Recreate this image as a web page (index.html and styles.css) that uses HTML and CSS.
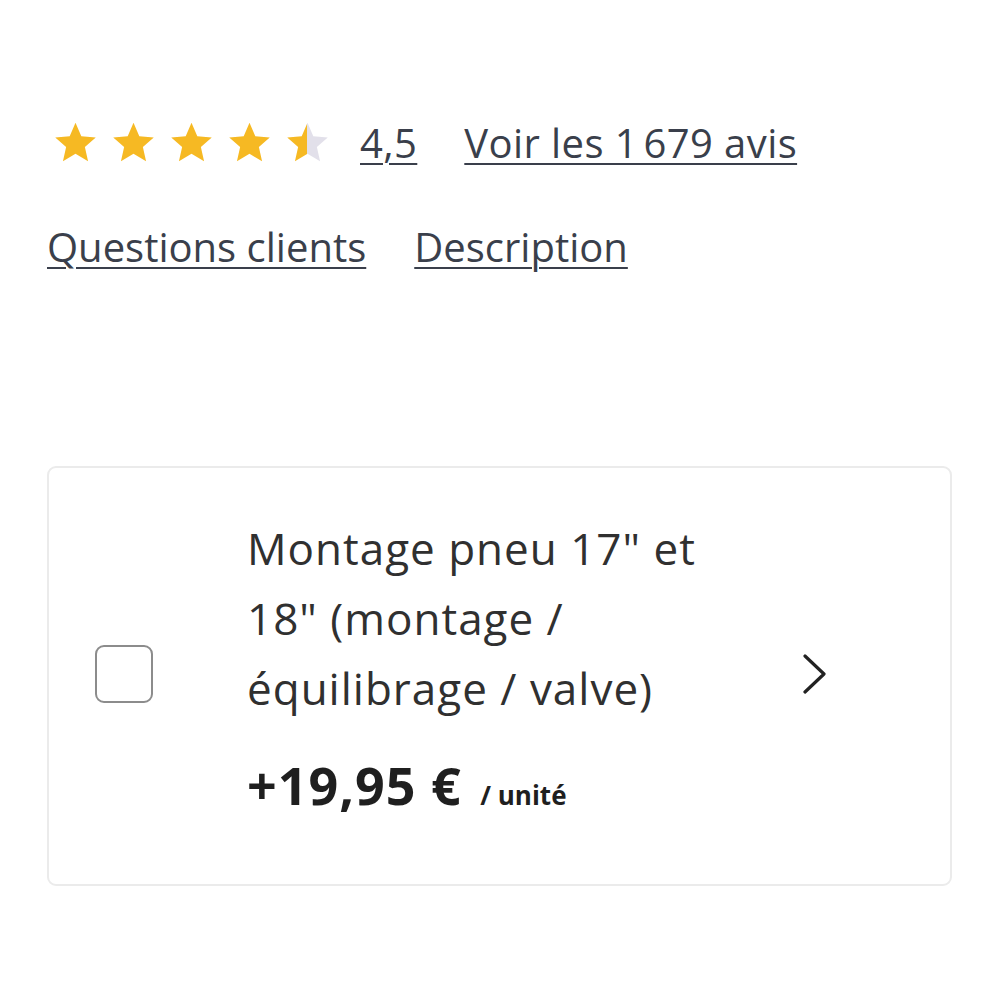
FILE: index.html
```html
<!DOCTYPE html>
<html lang="fr">

<head>
    <meta charset="UTF-8">
    <meta name="viewport" content="width=device-width, initial-scale=1.0">
    <title>Montage pneu</title>
    <link rel="stylesheet" href="styles.css">
</head>

<body>
    <section class="avis">
        <div class="etoiles">
            <svg class="etoile" viewBox="0 0 24 24"><path d="M12 1.5l3.1 7.1 7.7.7-5.8 5.1 1.7 7.6L12 18l-6.7 4 1.7-7.6-5.8-5.1 7.7-.7z" fill="#f6b923"/></svg>
            <svg class="etoile" viewBox="0 0 24 24"><path d="M12 1.5l3.1 7.1 7.7.7-5.8 5.1 1.7 7.6L12 18l-6.7 4 1.7-7.6-5.8-5.1 7.7-.7z" fill="#f6b923"/></svg>
            <svg class="etoile" viewBox="0 0 24 24"><path d="M12 1.5l3.1 7.1 7.7.7-5.8 5.1 1.7 7.6L12 18l-6.7 4 1.7-7.6-5.8-5.1 7.7-.7z" fill="#f6b923"/></svg>
            <svg class="etoile" viewBox="0 0 24 24"><path d="M12 1.5l3.1 7.1 7.7.7-5.8 5.1 1.7 7.6L12 18l-6.7 4 1.7-7.6-5.8-5.1 7.7-.7z" fill="#f6b923"/></svg>
            <svg class="etoile" viewBox="0 0 24 24">
                <defs>
                    <linearGradient id="moitie">
                        <stop offset="50%" stop-color="#f6b923"/>
                        <stop offset="50%" stop-color="#e2e0ea"/>
                    </linearGradient>
                </defs>
                <path d="M12 1.5l3.1 7.1 7.7.7-5.8 5.1 1.7 7.6L12 18l-6.7 4 1.7-7.6-5.8-5.1 7.7-.7z" fill="url(#moitie)"/>
            </svg>
        </div>
        <a href="#" class="lien note">4,5</a>
        <a href="#" class="lien">Voir les 1&#8239;679 avis</a>
    </section>

    <nav class="onglets">
        <a href="#" class="lien">Questions clients</a>
        <a href="#" class="lien">Description</a>
    </nav>

    <article class="option">
        <span class="case"></span>
        <div class="option-texte">
            <p class="option-titre">Montage pneu 17" et 18" (montage / équilibrage / valve)</p>
            <p class="option-prix">+19,95 € <span class="unite">/ unité</span></p>
        </div>
        <svg class="chevron" viewBox="0 0 24 40"><polyline points="2,2 21,20 2,38" fill="none" stroke="#222" stroke-width="3.2" stroke-linecap="round" stroke-linejoin="round"/></svg>
    </article>
</body>

</html>
```

FILE: styles.css
```css
/* Page */
body {
    font-family: "Open Sans", "Noto Sans", sans-serif;
    margin: 0;
    padding: 0 48px 0 47px;
    background-color: #fff;
    color: #2e2e2e;
}

.lien {
    color: #3a3f4b;
    text-decoration: underline;
    text-decoration-thickness: 2px;
    text-underline-offset: 5px;
}

/* Note et avis */
.avis {
    display: flex;
    align-items: center;
    margin-top: 120px;
    padding-left: 6px;
    font-size: 40px;
    line-height: 44px;
    letter-spacing: 0.4px;
}

.etoiles {
    display: flex;
    gap: 13px;
    margin-right: 30px;
}

.etoile {
    width: 45px;
    height: 45px;
}

.note {
    margin-right: 47px;
}

/* Onglets */
.onglets {
    display: flex;
    gap: 48px;
    margin-top: 60px;
    font-size: 40px;
    line-height: 44px;
}

/* Carte option */
.option {
    display: flex;
    align-items: center;
    margin-top: 197px;
    padding: 45px 0 57px 46px;
    border: 2px solid #ebebeb;
    border-radius: 9px;
}

.case {
    flex: none;
    width: 54px;
    height: 54px;
    margin-top: 8px;
    border: 2px solid #8c8c8c;
    border-radius: 9px;
    margin-right: 94px;
}

.option-texte {
    width: 500px;
}

.option-titre {
    margin: 0;
    font-size: 44px;
    line-height: 70px;
    letter-spacing: 1px;
    color: #303030;
}

.option-prix {
    margin: 30px 0 0;
    font-size: 52px;
    line-height: 64px;
    font-weight: bold;
    letter-spacing: 1px;
    color: #1f1f1f;
}

.unite {
    font-size: 26px;
    letter-spacing: 0;
    margin-left: 4px;
}

.chevron {
    flex: none;
    width: 24px;
    height: 40px;
    margin-top: 8px;
    margin-left: 56px;
}
```
